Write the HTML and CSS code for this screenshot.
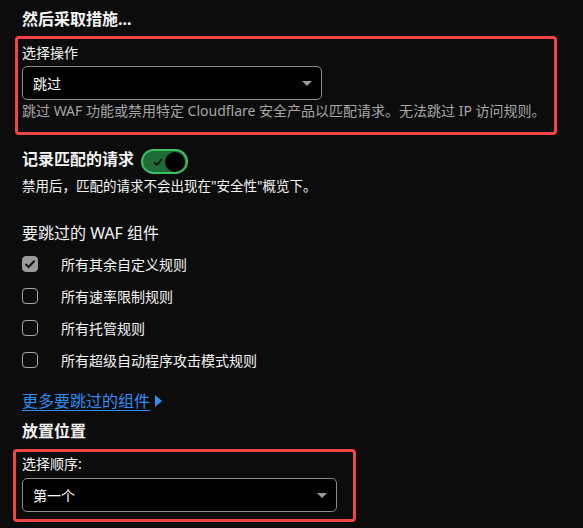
FILE: index.html
```html
<!DOCTYPE html>
<html lang="zh-CN">
<head>
    <meta charset="UTF-8">
    <meta name="viewport" content="width=device-width, initial-scale=1.0">
    <title>跳过规则</title>
    <link rel="stylesheet" href="styles.css">
</head>
<body>

    <h3 class="title">然后采取措施...</h3>

    <!-- Action select -->
    <div class="marked-box action-box">
        <div class="field-label">选择操作</div>
        <div class="select action-select">
            <span>跳过</span>
            <span class="caret"></span>
        </div>
        <div class="hint">跳过 WAF 功能或禁用特定 Cloudflare 安全产品以匹配请求。无法跳过 IP 访问规则。</div>
    </div>

    <div class="toggle-row">
        <span class="toggle-label">记录匹配的请求</span>
        <span class="toggle">
            <svg class="toggle-check" width="10" height="8" viewBox="0 0 10 8">
                <path d="M1 4.2 L3.8 7 L9 1" fill="none" stroke="#0c0c0c" stroke-width="1.6"/>
            </svg>
            <span class="knob"></span>
        </span>
    </div>
    <div class="note">禁用后，匹配的请求不会出现在"安全性"概览下。</div>

    <h4 class="group-title">要跳过的 WAF 组件</h4>
    <div class="check-list">
        <label class="check-row">
            <span class="box checked">
                <svg width="12" height="10" viewBox="0 0 12 10">
                    <path d="M1.5 5 L4.6 8 L10.5 1.8" fill="none" stroke="#111" stroke-width="2"/>
                </svg>
            </span>
            <span>所有其余自定义规则</span>
        </label>
        <label class="check-row">
            <span class="box"></span>
            <span>所有速率限制规则</span>
        </label>
        <label class="check-row">
            <span class="box"></span>
            <span>所有托管规则</span>
        </label>
        <label class="check-row">
            <span class="box"></span>
            <span>所有超级自动程序攻击模式规则</span>
        </label>
    </div>

    <div class="more">
        <a href="#" class="more-link">更多要跳过的组件</a>
        <svg class="more-arrow" width="9" height="14" viewBox="0 0 9 14">
            <path d="M1 1 L8 7 L1 13 Z" fill="#2f8ef5"/>
        </svg>
    </div>

    <h3 class="title place-title">放置位置</h3>

    <!-- Order select -->
    <div class="marked-box order-box">
        <div class="field-label">选择顺序:</div>
        <div class="select order-select">
            <span>第一个</span>
            <span class="caret"></span>
        </div>
    </div>

</body>
</html>
```

FILE: styles.css
```css
body {
    font-family: "Noto Sans", "Noto Sans CJK SC", sans-serif;
    background-color: #0c0c0c;
    color: #f4f4f4;
    margin: 0;
    padding: 8px 0 0 0;
}

.title {
    margin: 0 0 0 22px;
    font-size: 16px;
    line-height: 22px;
    font-weight: bold;
}

.marked-box {
    border: 3px solid #f24646;
    border-radius: 4px;
    box-sizing: border-box;
}

.action-box {
    margin: 6px 0 0 15px;
    width: 542px;
    padding: 4px 4px 12px 4px;
}

.order-box {
    margin: 7px 0 0 13px;
    width: 343px;
    padding: 2px 6px 7px 6px;
}

.field-label {
    font-size: 14px;
    line-height: 20px;
}

.select {
    display: flex;
    align-items: center;
    justify-content: space-between;
    box-sizing: border-box;
    height: 34px;
    padding: 0 9px 0 10px;
    background-color: #000;
    border: 1px solid #8c8c8c;
    border-radius: 5px;
    font-size: 14px;
    color: #fff;
}

.action-select {
    width: 300px;
    margin-top: 3px;
}

.order-select {
    width: 315px;
    margin-top: 4px;
}

.caret {
    width: 0;
    height: 0;
    border-left: 5px solid transparent;
    border-right: 5px solid transparent;
    border-top: 5px solid #9a9a9a;
}

.hint {
    margin-top: 2px;
    font-size: 14px;
    line-height: 18px;
    color: #a6a6a6;
    white-space: nowrap;
}

.toggle-row {
    display: flex;
    align-items: flex-start;
    margin: 14px 0 0 22px;
    height: 25px;
}

.toggle-label {
    font-size: 16px;
    line-height: 20px;
    font-weight: bold;
}

.toggle {
    display: flex;
    align-items: center;
    justify-content: space-between;
    box-sizing: border-box;
    width: 47px;
    height: 25px;
    margin-left: 7px;
    padding: 0 1px 0 10px;
    background-color: #1f6b37;
    border: 2px solid #3fbd62;
    border-radius: 13px;
}

.knob {
    width: 20px;
    height: 20px;
    border-radius: 50%;
    background-color: #000;
}

.note {
    margin: 3px 0 0 22px;
    font-size: 13.5px;
    line-height: 18px;
}

.group-title {
    margin: 27px 0 0 22px;
    font-size: 16px;
    line-height: 22px;
    font-weight: normal;
}

.check-list {
    margin: 4px 0 0 22px;
}

.check-row {
    display: flex;
    align-items: center;
    height: 32px;
    font-size: 14px;
}

.box {
    display: flex;
    align-items: center;
    justify-content: center;
    box-sizing: border-box;
    width: 16px;
    height: 16px;
    margin-right: 23px;
    border: 1.5px solid #a8a8a8;
    border-radius: 4px;
}

.box.checked {
    background-color: #9a9a9a;
    border-color: #9a9a9a;
}

.more {
    display: flex;
    align-items: center;
    margin: 14px 0 0 22px;
    height: 22px;
}

.more-link {
    font-size: 16px;
    line-height: 22px;
    color: #2f8ef5;
    text-decoration: underline;
    text-underline-offset: 3px;
}

.more-arrow {
    margin-left: 4px;
}

.place-title {
    margin-top: 8px;
}
```
